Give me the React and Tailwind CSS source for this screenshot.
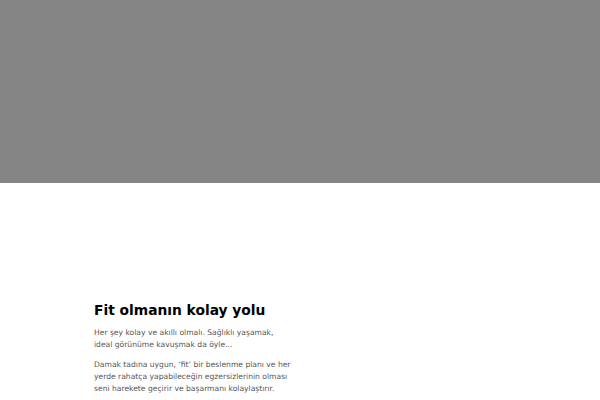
import React from 'react';

export default function App() {
  return (
    <div className="w-[600px] h-[400px] overflow-hidden bg-white" style={{ fontFamily: '"DejaVu Sans", sans-serif' }}>
      <div className="h-[183px] bg-[#858585]" />
      <div className="ml-[94px] pt-[117px] w-[200px]">
        <h2 className="text-[13.8px] font-bold text-black leading-5">Fit olmanın kolay yolu</h2>
        <p className="mt-[7px] text-[7.6px] leading-[12px] text-[#555]">
          Her şey kolay ve akıllı olmalı. Sağlıklı yaşamak, ideal görünüme kavuşmak da öyle...
        </p>
        <p className="mt-2 text-[7.6px] leading-[12px] text-[#555]">
          Damak tadına uygun, ‘fit’ bir beslenme planı ve her yerde rahatça yapabileceğin egzersizlerinin olması seni harekete geçirir ve başarmanı kolaylaştırır.
        </p>
      </div>
    </div>
  );
}
